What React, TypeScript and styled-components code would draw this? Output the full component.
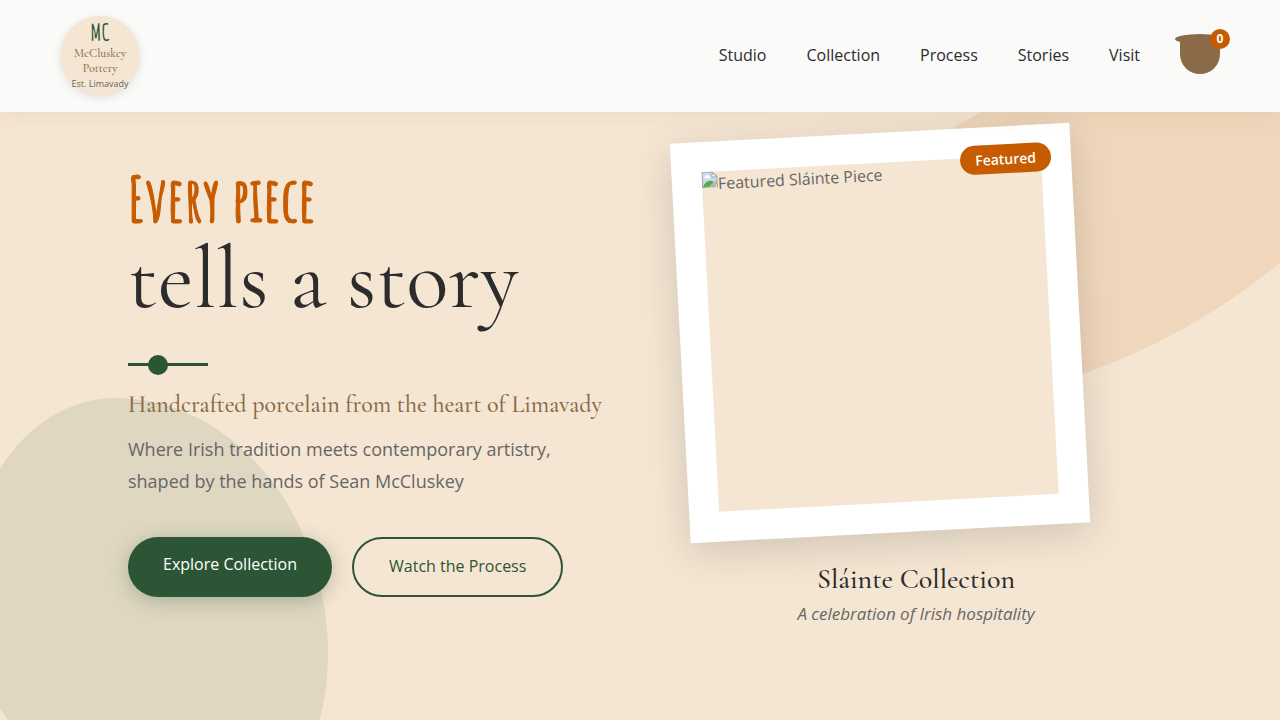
import React from "react";
import styled, { createGlobalStyle } from "styled-components";

const colors = {
  cream: "#f5e6d3",
  white: "#fafaf8",
  green: "#2c5535",
  rust: "#c75b00",
  clay: "#8b6b47",
  ink: "#2c2c2c",
  grey: "#666666",
};
const serif = `"Cormorant Garamond", "Liberation Serif", serif`;
const sans = `"Open Sans", "Noto Sans", sans-serif`;
const hand = `"Amatic SC", "Liberation Sans Narrow", "DejaVu Sans Condensed", sans-serif`;

const GlobalStyle = createGlobalStyle`
  * { box-sizing: border-box; margin: 0; padding: 0; }
  body {
    font-family: ${sans};
    font-size: 16px;
    line-height: 26px;
    color: ${colors.ink};
    background: ${colors.cream};
  }
  a { color: inherit; text-decoration: none; }
`;

const Page = styled.div`
  min-height: 100vh;
  display: flex;
  flex-direction: column;
`;

const Header = styled.header`
  position: sticky;
  top: 0;
  z-index: 10;
  display: flex;
  align-items: center;
  justify-content: space-between;
  padding: 16px 60px;
  background: ${colors.white};
  box-shadow: 0 2px 20px rgba(139, 107, 71, 0.1);
`;

const Logo = styled.a`
  display: flex;
  flex-direction: column;
  align-items: center;
  justify-content: center;
  width: 80px;
  height: 80px;
  border-radius: 50%;
  background: ${colors.cream};
  box-shadow: 0 2px 10px rgba(0, 0, 0, 0.1);
  text-align: center;
  white-space: nowrap;
`;

const Monogram = styled.span`
  padding-bottom: 2px;
  font: 700 24px/24px ${hand};
  color: ${colors.green};
`;

const LogoName = styled.span`
  font: 500 12px/15px ${serif};
  color: ${colors.clay};
`;

const LogoPlace = styled.span`
  font-size: 9px;
  line-height: 16px;
  color: ${colors.grey};
`;

const Nav = styled.nav`
  display: flex;
  align-items: center;
  gap: 40px;
`;

const NavLink = styled.a`
  padding-bottom: 2px;
`;

const Cup = styled.button`
  position: relative;
  width: 40px;
  height: 35px;
  border: 0;
  border-radius: 0 0 20px 20px;
  background: ${colors.clay};
  cursor: pointer;

  &::before {
    content: "";
    position: absolute;
    top: -5px;
    left: -5px;
    width: 50px;
    height: 10px;
    border-radius: 50%;
    background: ${colors.clay};
  }
`;

const CupCount = styled.span`
  position: absolute;
  top: -10px;
  right: -10px;
  width: 20px;
  height: 20px;
  border-radius: 50%;
  background: ${colors.rust};
  color: white;
  font: 700 12px/20px ${sans};
  text-align: center;
`;

const Hero = styled.main`
  position: relative;
  flex: 1;
  overflow: hidden;
  padding: 21px 10% 60px;
`;

const GreenBlob = styled.div`
  position: absolute;
  left: -33px;
  top: 286px;
  width: 361px;
  height: 430px;
  border-radius: 148px 213px 113px 248px / 190px 257px 173px 240px;
  background: ${colors.green};
  opacity: 0.1;
`;

const RustBlob = styled.svg`
  position: absolute;
  top: 0;
  right: 0;
  width: 400px;
  height: 300px;
  fill: ${colors.rust};
  opacity: 0.1;
`;

const Columns = styled.div`
  position: relative;
  display: grid;
  grid-template-columns: repeat(2, minmax(0, 1fr));
  align-items: center;
  gap: 80px;
`;

const Title = styled.h1`
  font-weight: 400;
  white-space: nowrap;
`;

const TitleLead = styled.span`
  display: block;
  margin-bottom: 4px;
  font: 700 62px/60px ${hand};
  color: ${colors.rust};
  -webkit-text-stroke: 1px ${colors.rust};
`;

const TitleRest = styled.span`
  display: block;
  font: 400 88px/94px ${serif};
`;

const Divider = styled.div`
  position: relative;
  width: 80px;
  height: 3px;
  margin: 37px 0 23px;
  background: ${colors.green};

  &::after {
    content: "";
    position: absolute;
    top: -8px;
    left: 20px;
    width: 20px;
    height: 20px;
    border-radius: 50%;
    background: ${colors.green};
  }
`;

const Subtitle = styled.p`
  margin-bottom: 12px;
  font: 500 24px/32px ${serif};
  color: ${colors.clay};
  white-space: nowrap;
`;

const Intro = styled.p`
  font-size: 18px;
  line-height: 32px;
  color: ${colors.grey};
`;

const Actions = styled.div`
  display: flex;
  gap: 20px;
  margin-top: 40px;
`;

const Action = styled.a<{ $solid?: boolean }>`
  padding: 14px 35px 16px;
  border: ${(p) => (p.$solid ? "0" : `2px solid ${colors.green}`)};
  border-radius: 30px;
  background: ${(p) => (p.$solid ? colors.green : "transparent")};
  color: ${(p) => (p.$solid ? "white" : colors.green)};
  box-shadow: ${(p) => (p.$solid ? "0 4px 20px rgba(44, 85, 53, 0.3)" : "none")};
  white-space: nowrap;
`;

const Frame = styled.div`
  position: relative;
  width: 400px;
  padding: 30px;
  background: white;
  box-shadow: 0 10px 40px rgba(0, 0, 0, 0.15);
  transform: rotate(-3deg);
`;

const Photo = styled.div`
  display: flex;
  align-items: flex-start;
  height: 340px;
  background: ${colors.cream};
  color: ${colors.grey};
  line-height: 24px;
`;

const Tag = styled.span`
  position: absolute;
  top: 18px;
  right: 20px;
  padding: 4px 15px;
  border-radius: 20px;
  background: ${colors.rust};
  color: white;
  font-size: 14px;
  font-weight: 600;
  line-height: 21px;
`;

const Caption = styled.figcaption`
  padding: 30px 0 5px;
  text-align: center;
`;

const CaptionTitle = styled.h2`
  margin-bottom: 6px;
  font: 500 28px/32px ${serif};
`;

const CaptionText = styled.p`
  font-size: 17px;
  font-style: italic;
  color: ${colors.grey};
`;

const links = ["Studio", "Collection", "Process", "Stories", "Visit"];

const BrokenImage = () => (
  <svg width="16" height="16" viewBox="0 0 16 16" aria-hidden="true">
    <path d="M.5 15.500V.5h10l5 5v3l-7 7z" fill="#c6d9fb" stroke="#a5a5a5" />
    <path d="M10.500.5v5h5z" fill="#fff" stroke="#a5a5a5" />
    <path d="M3 6.500a1.500 1.500 0 0 1 1-2.500 2 2 0 0 1 3.500.5 1 1 0 0 1 .5 2z" fill="#fff" />
    <path d="M1 15c1-3 4-6 7-6 1.500 0 3 .5 4 1.500L7.500 15z" fill="#5cae3c" />
    <path d="M10.500 15.500h5v-5z" fill="#c6d9fb" stroke="#a5a5a5" />
  </svg>
);

export default function App() {
  return (
    <Page>
      <GlobalStyle />
      <Header>
        <Logo href="#home">
          <Monogram>MC</Monogram>
          <LogoName>
            McCluskey
            <br />
            Pottery
          </LogoName>
          <LogoPlace>Est. Limavady</LogoPlace>
        </Logo>
        <Nav>
          {links.map((label) => (
            <NavLink key={label} href={`#${label.toLowerCase()}`}>
              {label}
            </NavLink>
          ))}
          <Cup type="button" aria-label="Basket">
            <CupCount>0</CupCount>
          </Cup>
        </Nav>
      </Header>
      <Hero>
        <GreenBlob />
        <RustBlob viewBox="0 0 400 300" aria-hidden="true">
          <path d="M101 0Q86 8 72 17C20 50 10 100 20 170C35 262 120 291 203 262Q310 224 400 151V0Z" />
        </RustBlob>
        <Columns>
          <section>
            <Title>
              <TitleLead>Every piece</TitleLead>
              <TitleRest>tells a story</TitleRest>
            </Title>
            <Divider />
            <Subtitle>Handcrafted porcelain from the heart of Limavady</Subtitle>
            <Intro>
              Where Irish tradition meets contemporary artistry,
              <br />
              shaped by the hands of Sean McCluskey
            </Intro>
            <Actions>
              <Action $solid href="#collection">
                Explore Collection
              </Action>
              <Action href="#process">Watch the Process</Action>
            </Actions>
          </section>
          <figure>
            <Frame>
              <Photo>
                <BrokenImage />
                <span>Featured Sláinte Piece</span>
              </Photo>
              <Tag>Featured</Tag>
            </Frame>
            <Caption>
              <CaptionTitle>Sláinte Collection</CaptionTitle>
              <CaptionText>A celebration of Irish hospitality</CaptionText>
            </Caption>
          </figure>
        </Columns>
      </Hero>
    </Page>
  );
}
